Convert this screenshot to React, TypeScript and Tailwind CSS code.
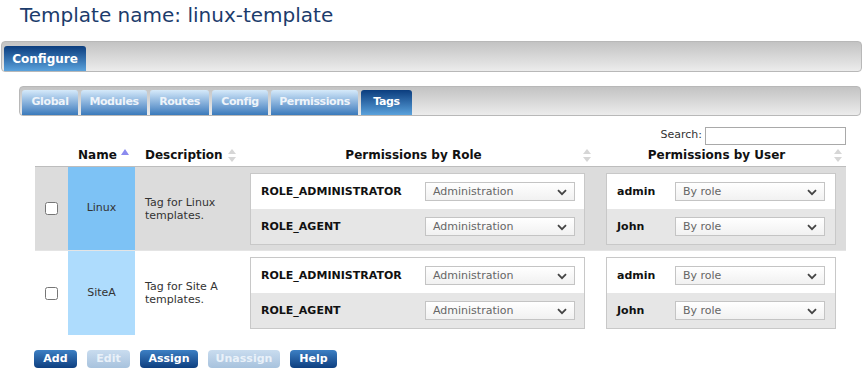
import { ReactNode } from 'react';

const FONT = "font-['DejaVu_Sans',Verdana,sans-serif]";

const tabs = [
    { label: 'Global', w: 'w-[56px]' },
    { label: 'Modules', w: 'w-[66px]' },
    { label: 'Routes', w: 'w-[59px]' },
    { label: 'Config', w: 'w-[56px]' },
    { label: 'Permissions', w: 'w-[87px]' },
    { label: 'Tags', w: 'w-[51px]' },
];

const rows = [
    { name: 'Linux', desc: 'Tag for Linux templates.', rowBg: 'bg-[#dcdcdc]', nameBg: 'bg-[#7dc2f5]' },
    { name: 'SiteA', desc: 'Tag for Site A templates.', rowBg: 'bg-white', nameBg: 'bg-[#aedcfd]' },
];

const Chevron = () => (
    <svg width="10" height="7" viewBox="0 0 10 7" className="absolute right-[7px] top-[6px]">
        <path d="M1 1.2 L5 5.2 L9 1.2" fill="none" stroke="#444" strokeWidth="1.8" />
    </svg>
);

const FakeSelect = ({ value }: { value: string }) => (
    <div className="relative h-[19px] w-[150px] border border-[#c4c4c4] bg-gradient-to-b from-white to-[#f1f1f1] pl-[7px] text-[11px] leading-[17px] text-[#666]">
        {value}
        <Chevron />
    </div>
);

const SortBoth = () => (
    <svg width="8" height="13" viewBox="0 0 8 13" className="absolute right-[4px] top-[4px]">
        <path d="M4 0 L8 5 L0 5 Z" fill="#d6d6d6" />
        <path d="M0 8 L8 8 L4 13 Z" fill="#d6d6d6" />
    </svg>
);

const SortUp = () => (
    <svg width="8" height="6" viewBox="0 0 8 6" className="absolute right-[6px] top-[4px]">
        <path d="M4 0 L8 6 L0 6 Z" fill="#8b8bef" />
    </svg>
);

const PermBox = ({ labelW, items }: { labelW: string; items: [string, string][] }) => (
    <div className="border border-[#c8c8c8]">
        {items.map(([label, value], i) => (
            <div key={label} className={`flex h-[35px] items-center ${i === 0 ? 'bg-white' : 'bg-[#e6e6e6]'}`}>
                <span className={`${labelW} pl-[10px] pt-[2px] text-[11px] font-bold text-[#111]`}>{label}</span>
                <FakeSelect value={value} />
            </div>
        ))}
    </div>
);

const Btn = ({ children, w, disabled }: { children: ReactNode; w: string; disabled?: boolean }) => (
    <button
        type="button"
        className={`${w} h-[18px] rounded-[4px] text-[11px] font-bold leading-[18px] ${
            disabled
                ? 'bg-gradient-to-b from-[#c9dcef] to-[#a7c2dd] text-[#e9f1f9]'
                : 'bg-gradient-to-b from-[#3d80c4] to-[#0e3f80] text-white'
        }`}
    >
        {children}
    </button>
);

export default function App() {
    return (
        <div className={`${FONT} h-[376px] w-[863px] overflow-hidden bg-white text-[#222]`}>
            <h1 className="pl-[20px] pt-[2px] text-[20px] leading-[26px] text-[#1c3c6c]">Template name: linux-template</h1>

            <div className="ml-[1px] mr-[1px] mt-[13px] h-[31px] rounded-[4px] border border-[#b8b8b8] bg-gradient-to-b from-[#c3c3c3] to-[#ececec] pl-[2px] pt-[4px]">
                <div className="flex h-[25px] w-[82px] items-center justify-center rounded-t-[3px] bg-gradient-to-b from-[#0b3d7e] to-[#5aa2dc] text-[12px] font-bold text-white">
                    Configure
                </div>
            </div>

            <div className="ml-[19px] mr-[2px] mt-[14px] flex h-[30px] gap-[3px] rounded-[4px] border border-[#b8b8b8] bg-gradient-to-b from-[#c3c3c3] to-[#ececec] pl-[2px] pt-[3px]">
                {tabs.map((t) => (
                    <div
                        key={t.label}
                        className={`${t.w} flex h-[25px] items-center justify-center rounded-t-[3px] text-[11px] font-bold tracking-[-0.4px] ${
                            t.label === 'Tags'
                                ? 'bg-gradient-to-b from-[#0b3d7e] to-[#5aa2dc] text-white'
                                : 'bg-gradient-to-b from-[#d6eafa] to-[#3a7abb] text-[#eef4fa]'
                        }`}
                    >
                        {t.label}
                    </div>
                ))}
            </div>

            <div className="mt-[10px] flex h-[19px] items-center justify-end pr-[17px] text-[11px] text-[#333]">
                <span className="mr-[3px]">Search:</span>
                <div className="h-[18px] w-[141px] border border-[#a9a9a9] bg-white" />
            </div>

            <div className="ml-[35px] w-[811px]">
                <div className="grid h-[22px] grid-cols-[33px_67px_105px_355px_251px] border-b border-[#bdbdbd] text-[12px] font-bold text-[#111]">
                    <div />
                    <div className="relative pl-[10px] leading-[21px]">
                        Name
                        <SortUp />
                    </div>
                    <div className="relative pl-[10px] leading-[21px]">
                        Description
                        <SortBoth />
                    </div>
                    <div className="relative pl-[10px] pr-[18px] text-center leading-[21px]">
                        Permissions by Role
                        <SortBoth />
                    </div>
                    <div className="relative pl-[10px] pr-[18px] text-center leading-[21px]">
                        Permissions by User
                        <SortBoth />
                    </div>
                </div>

                {rows.map((r, i) => (
                    <div
                        key={r.name}
                        className={`grid h-[84px] grid-cols-[33px_67px_105px_355px_251px] ${r.rowBg} ${i === 0 ? 'border-b border-[#e4e4e4]' : ''}`}
                    >
                        <div className="flex items-center pl-[10px]">
                            <input type="checkbox" className="m-0 h-[13px] w-[13px]" />
                        </div>
                        <div className={`flex items-center justify-center text-[11px] text-[#333] ${r.nameBg}`}>{r.name}</div>
                        <div className="flex items-center pl-[10px] pr-[8px] text-[11px] leading-[13px] text-[#333]">{r.desc}</div>
                        <div className="flex flex-col justify-center pl-[10px] pr-[10px]">
                            <PermBox
                                labelW="w-[174px]"
                                items={[
                                    ['ROLE_ADMINISTRATOR', 'Administration'],
                                    ['ROLE_AGENT', 'Administration'],
                                ]}
                            />
                        </div>
                        <div className="flex flex-col justify-center pl-[11px] pr-[10px]">
                            <PermBox
                                labelW="w-[68px]"
                                items={[
                                    ['admin', 'By role'],
                                    ['John', 'By role'],
                                ]}
                            />
                        </div>
                    </div>
                ))}
            </div>

            <div className="ml-[34px] mt-[15px] flex gap-[10px]">
                <Btn w="w-[43px]">Add</Btn>
                <Btn w="w-[43px]" disabled>
                    Edit
                </Btn>
                <Btn w="w-[58px]">Assign</Btn>
                <Btn w="w-[72px]" disabled>
                    Unassign
                </Btn>
                <Btn w="w-[47px]">Help</Btn>
            </div>
        </div>
    );
}
